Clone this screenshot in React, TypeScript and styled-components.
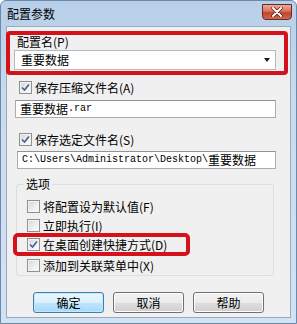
import React from 'react';
import styled, { createGlobalStyle } from 'styled-components';

const GlobalStyle = createGlobalStyle`
  html, body {
    margin: 0;
    padding: 0;
  }
  body {
    font-family: "Noto Sans CJK SC", "Noto Sans", sans-serif;
    font-size: 12px;
    color: #000;
  }
`;

const Window = styled.div`
  width: 297px;
  height: 324px;
  box-sizing: border-box;
  display: flex;
  flex-direction: column;
  background: linear-gradient(180deg, #b7cfe9 0%, #c9dbef 30%, #d3e2f3 100%);
  border: 1px solid #6d89aa;
  border-radius: 6px 6px 0 0;
  padding: 0 5px 5px 5px;
`;

const TitleBar = styled.div`
  height: 25px;
  display: flex;
  justify-content: space-between;
  align-items: center;
`;

const TitleText = styled.div`
  padding-left: 1px;
  line-height: 14px;
  font-size: 12px;
`;

const CloseButton = styled.div`
  align-self: flex-start;
  margin-top: 3px;
  margin-right: -1px;
  width: 30px;
  height: 16px;
  box-sizing: border-box;
  border: 1px solid #6b2a20;
  border-radius: 0 0 4px 4px;
  background: linear-gradient(180deg, #e9a99a 0%, #d7735f 45%, #c2452c 55%, #d06a4f 100%);
  display: flex;
  align-items: center;
  justify-content: center;
`;

const Client = styled.div`
  flex: 1;
  display: flex;
  flex-direction: column;
  background: #f0f0f0;
  border: 1px solid #98aac0;
`;

const Highlight = styled.div`
  border: 4px solid #d3121c;
  border-radius: 4px;
`;

const NameBox = styled(Highlight)`
  margin: 4px 2px 0 -1px;
  padding: 0 0 1px 0;
  display: flex;
  flex-direction: column;
`;

const FieldLabel = styled.div`
  height: 13px;
  line-height: 13px;
  padding-left: 7px;
`;

const Combo = styled.div`
  margin: 2px 8px 0 4px;
  height: 20px;
  box-sizing: border-box;
  border: 1px solid #b6b9be;
  background: #fff;
  display: flex;
  align-items: center;
  justify-content: space-between;
  padding: 0 5px 0 6px;
  line-height: 14px;
`;

const Arrow = styled.div`
  width: 0;
  height: 0;
  border-left: 3.5px solid transparent;
  border-right: 3.5px solid transparent;
  border-top: 4px solid #1a1a1a;
`;

const Row = styled.div<{ $top?: number; $left?: number }>`
  display: flex;
  align-items: center;
  height: 15px;
  margin-top: ${p => p.$top ?? 0}px;
  padding-left: ${p => p.$left ?? 10}px;
  line-height: 15px;
  white-space: nowrap;
`;

const Box = styled.div`
  width: 13px;
  height: 13px;
  box-sizing: border-box;
  border: 1px solid #8e8f8f;
  background: linear-gradient(135deg, #d2d4d8 0%, #eef0f2 60%, #fdfdfd 100%);
  box-shadow: inset 0 0 0 1px #f4f4f4;
  margin-right: 3px;
  flex: none;
  display: flex;
  align-items: center;
  justify-content: center;
`;

const TextField = styled.div<{ $top: number; $left: number }>`
  margin: ${p => p.$top}px 14px 0 ${p => p.$left}px;
  height: 18px;
  box-sizing: border-box;
  border: 1px solid #abadb3;
  border-top-color: #8f9299;
  background: #fff;
  display: flex;
  align-items: center;
  padding-left: 4px;
  white-space: nowrap;
  overflow: hidden;
`;

const Mono = styled.span`
  font-family: "Liberation Mono", "Noto Sans CJK SC", monospace;
  font-size: 10px;
  line-height: 14px;
`;

const Cjk = styled.span`
  font-family: "Noto Sans CJK SC", sans-serif;
  font-size: 12px;
  line-height: 14px;
`;

const Group = styled.fieldset`
  margin: 8px 16px 0 9px;
  padding: 0 0 2px 0;
  border: 1px solid #d5dfe5;
  border-radius: 3px;
  display: flex;
  flex-direction: column;
  min-width: 0;
`;

const Legend = styled.legend`
  margin-left: 7px;
  padding: 0 2px;
  line-height: 14px;
  height: 14px;
`;

const ShortcutBox = styled(Highlight)`
  margin-left: -4px;
  width: 177px;
  box-sizing: border-box;
  border-radius: 5px;
  padding-left: 10px;
  display: flex;
  align-items: center;
  height: 23px;
  white-space: nowrap;
`;

const Buttons = styled.div`
  display: flex;
  gap: 9px;
  margin-top: 16px;
  padding-left: 26px;
`;

const Button = styled.div<{ $default?: boolean }>`
  width: 71px;
  height: 21px;
  box-sizing: border-box;
  border: 1px solid ${p => (p.$default ? '#3c7fb1' : '#707070')};
  border-radius: 3px;
  background: ${p =>
    p.$default
      ? 'linear-gradient(180deg, #eaf6fd 0%, #d9f0fc 50%, #bee6fd 51%, #a7d9f5 100%)'
      : 'linear-gradient(180deg, #f2f2f2 0%, #ebebeb 50%, #dddddd 51%, #cfcfcf 100%)'};
  box-shadow: inset 0 0 0 1px ${p => (p.$default ? '#c7e6f8' : '#fcfcfc')};
  display: flex;
  align-items: center;
  justify-content: center;
  line-height: 14px;
`;

const Check = () => (
  <svg width="9" height="9" viewBox="0 0 9 9">
    <path d="M1 4.5 L3.5 7 L8 1.5" fill="none" stroke="#4a5e8c" strokeWidth="1.6" />
  </svg>
);

const CheckBox = ({ checked }: { checked?: boolean }) => <Box>{checked && <Check />}</Box>;

const App = () => {
  return (
    <>
      <GlobalStyle />
      <Window>
        <TitleBar>
          <TitleText>配置参数</TitleText>
          <CloseButton>
            <svg width="12" height="10" viewBox="0 0 12 10">
              <path d="M2 1 L10 9 M10 1 L2 9" stroke="#5a1a10" strokeWidth="3.4" strokeLinecap="round" />
              <path d="M2 1 L10 9 M10 1 L2 9" stroke="#fff" strokeWidth="2" strokeLinecap="round" />
            </svg>
          </CloseButton>
        </TitleBar>
        <Client>
          <NameBox>
            <FieldLabel>配置名(P)</FieldLabel>
            <Combo>
              <span>重要数据</span>
              <Arrow />
            </Combo>
          </NameBox>
          <Row $top={5} $left={12}>
            <CheckBox checked />
            保存压缩文件名(A)
          </Row>
          <TextField $top={5} $left={8}>
            <Cjk>重要数据</Cjk>
            <Mono>.rar</Mono>
          </TextField>
          <Row $top={14} $left={12}>
            <CheckBox checked />
            保存选定文件名(S)
          </Row>
          <TextField $top={4} $left={10}>
            <Mono>C:\Users\Administrator\Desktop\</Mono>
            <Cjk>重要数据</Cjk>
          </TextField>
          <Group>
            <Legend>选项</Legend>
            <Row $top={8}>
              <CheckBox />
              将配置设为默认值(F)
            </Row>
            <Row $top={4}>
              <CheckBox />
              立即执行(I)
            </Row>
            <ShortcutBox>
              <CheckBox checked />
              在桌面创建快捷方式(D)
            </ShortcutBox>
            <Row $top={2}>
              <CheckBox />
              添加到关联菜单中(X)
            </Row>
          </Group>
          <Buttons>
            <Button $default>确定</Button>
            <Button>取消</Button>
            <Button>帮助</Button>
          </Buttons>
        </Client>
      </Window>
    </>
  );
};

export default App;
